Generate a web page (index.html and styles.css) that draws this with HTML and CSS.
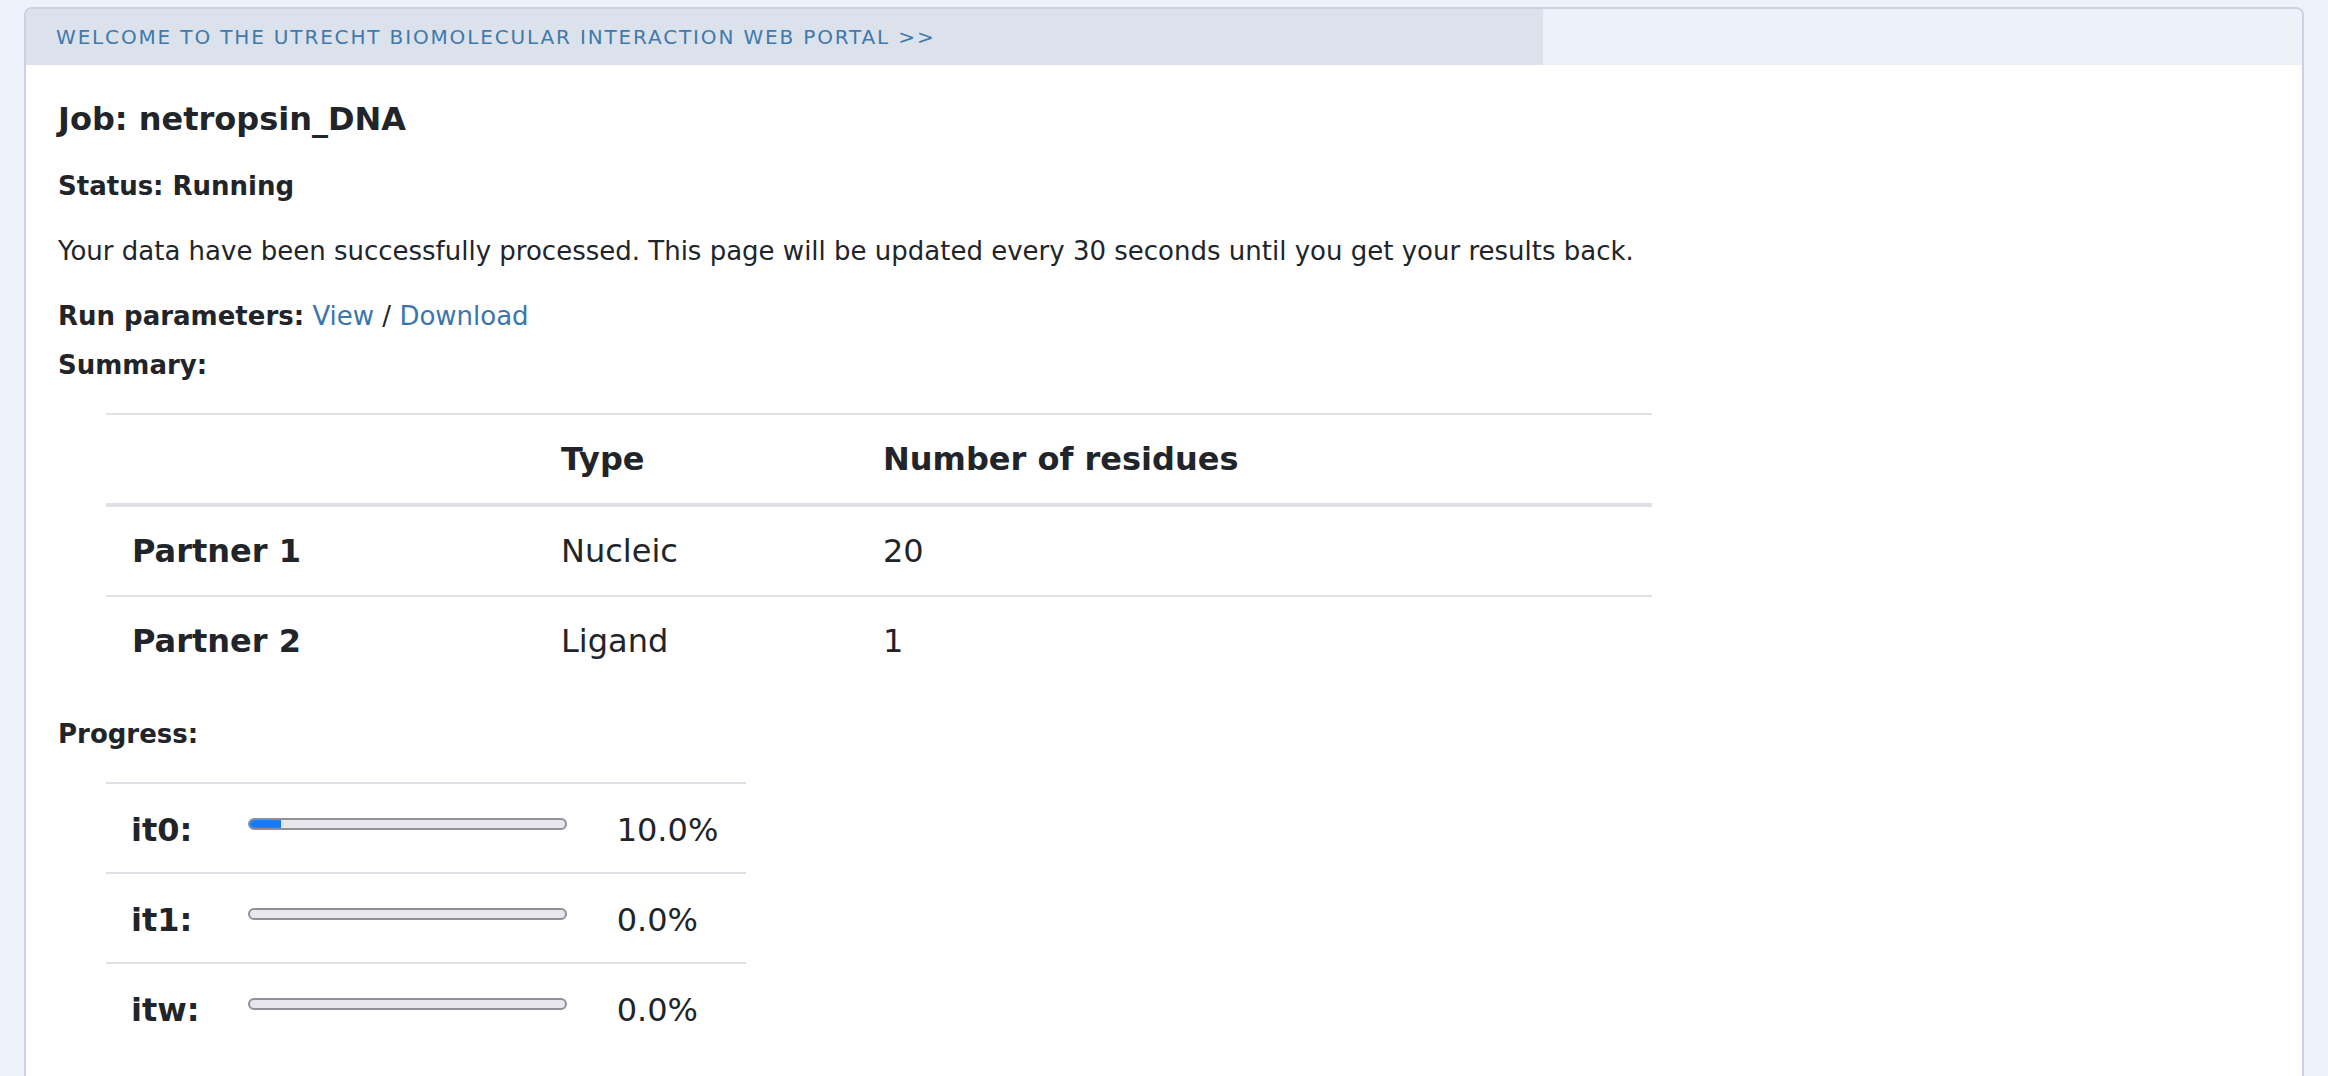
FILE: index.html
```html
<!DOCTYPE html>
<html lang="en">
<head>
<meta charset="utf-8">
<title>Job: netropsin_DNA</title>
<link rel="stylesheet" href="styles.css">
</head>
<body>
<div class="card">
  <div class="card-header">
    <div class="portal-tab">Welcome to the Utrecht Biomolecular Interaction Web Portal &gt;&gt;</div>
    <div class="portal-rest"></div>
  </div>
  <div class="card-body">
    <h2 class="job-title">Job: netropsin_DNA</h2>
    <h4 class="status">Status: Running</h4>
    <p class="message">Your data have been successfully processed. This page will be updated every 30 seconds until you get your results back.</p>
    <p class="params"><b>Run parameters:</b> <a href="#">View</a> / <a href="#">Download</a></p>
    <p class="label summary-label"><b>Summary:</b></p>
    <table class="summary">
      <thead>
        <tr><th class="c1"></th><th class="c2">Type</th><th class="c3">Number of residues</th></tr>
      </thead>
      <tbody>
        <tr><th>Partner 1</th><td>Nucleic</td><td>20</td></tr>
        <tr><th>Partner 2</th><td>Ligand</td><td>1</td></tr>
      </tbody>
    </table>
    <p class="label progress-label"><b>Progress:</b></p>
    <table class="progress-table">
      <tbody>
        <tr><th>it0:</th><td><div class="bar"><div class="fill" style="width:10%"></div></div></td><td class="pct">10.0%</td></tr>
        <tr><th>it1:</th><td><div class="bar"><div class="fill" style="width:0%"></div></div></td><td class="pct">0.0%</td></tr>
        <tr><th>itw:</th><td><div class="bar"><div class="fill" style="width:0%"></div></div></td><td class="pct">0.0%</td></tr>
      </tbody>
    </table>
  </div>
</div>
</body>
</html>
```
FILE: styles.css
```css
html, body {
  margin: 0;
  padding: 0;
}
body {
  background: #eef2fa;
  font-family: "DejaVu Sans", Verdana, sans-serif;
  color: #212529;
  padding: 7px 24px 0 24px;
}
.card {
  background: #ffffff;
  border: 2px solid #cdcfe2;
  border-bottom: none;
  border-radius: 8px 8px 0 0;
  overflow: hidden;
  min-height: 1080px;
}
.card-header {
  display: flex;
  height: 56px;
}
.portal-tab {
  width: 66.6667%;
  background: #dbe2ec;
  color: #4179ab;
  text-transform: uppercase;
  font-size: 20px;
  line-height: 56px;
  letter-spacing: 1.85px;
  padding-left: 30px;
  box-sizing: border-box;
  white-space: nowrap;
}
.portal-rest {
  flex: 1;
  background: #ecf1fa;
}
.card-body {
  padding: 30px 32px 0 32px;
}
.job-title {
  margin: 0;
  font-size: 32px;
  line-height: 48px;
  font-weight: bold;
}
.status {
  margin: 24px 0 0 0;
  font-size: 26px;
  line-height: 39px;
  font-weight: bold;
}
.message {
  margin: 26px 0 0 0;
  font-size: 26px;
  line-height: 39px;
}
.params {
  margin: 26px 0 0 0;
  font-size: 26px;
  line-height: 39px;
}
.params a {
  color: #3a76a9;
  text-decoration: none;
}
.label {
  margin: 10px 0 0 0;
  font-size: 26px;
  line-height: 39px;
}
.summary {
  margin: 28px 0 0 48px;
  border-collapse: collapse;
  width: 1546px;
  font-size: 32px;
  line-height: 48px;
}
.summary th, .summary td {
  text-align: left;
  padding: 20px 26px;
  border-top: 2px solid #dee2e6;
}
.summary thead th {
  border-bottom: 4px solid #dee2e6;
}
.summary tbody tr:first-child th, .summary tbody tr:first-child td {
  border-top: none;
}
.summary .c1 { width: 377px; }
.summary .c2 { width: 270px; }
.progress-label {
  margin-top: 30px;
}
.progress-table {
  margin: 28px 0 0 48px;
  border-collapse: collapse;
  font-size: 32px;
  line-height: 48px;
}
.progress-table th, .progress-table td {
  text-align: left;
  padding: 22px 25px 18px 25px;
  border-top: 2px solid #dee2e6;
  vertical-align: middle;
}
.progress-table th {
  padding-right: 23px;
}
.progress-table .pct {
  padding-right: 28px;
}
.bar {
  width: 315px;
  height: 8px;
  border: 2px solid #908f9a;
  border-radius: 6px;
  background: #e8e7ed;
  overflow: hidden;
  margin-bottom: 12px;
}
.fill {
  height: 100%;
  background: #1a7bf7;
}
```
